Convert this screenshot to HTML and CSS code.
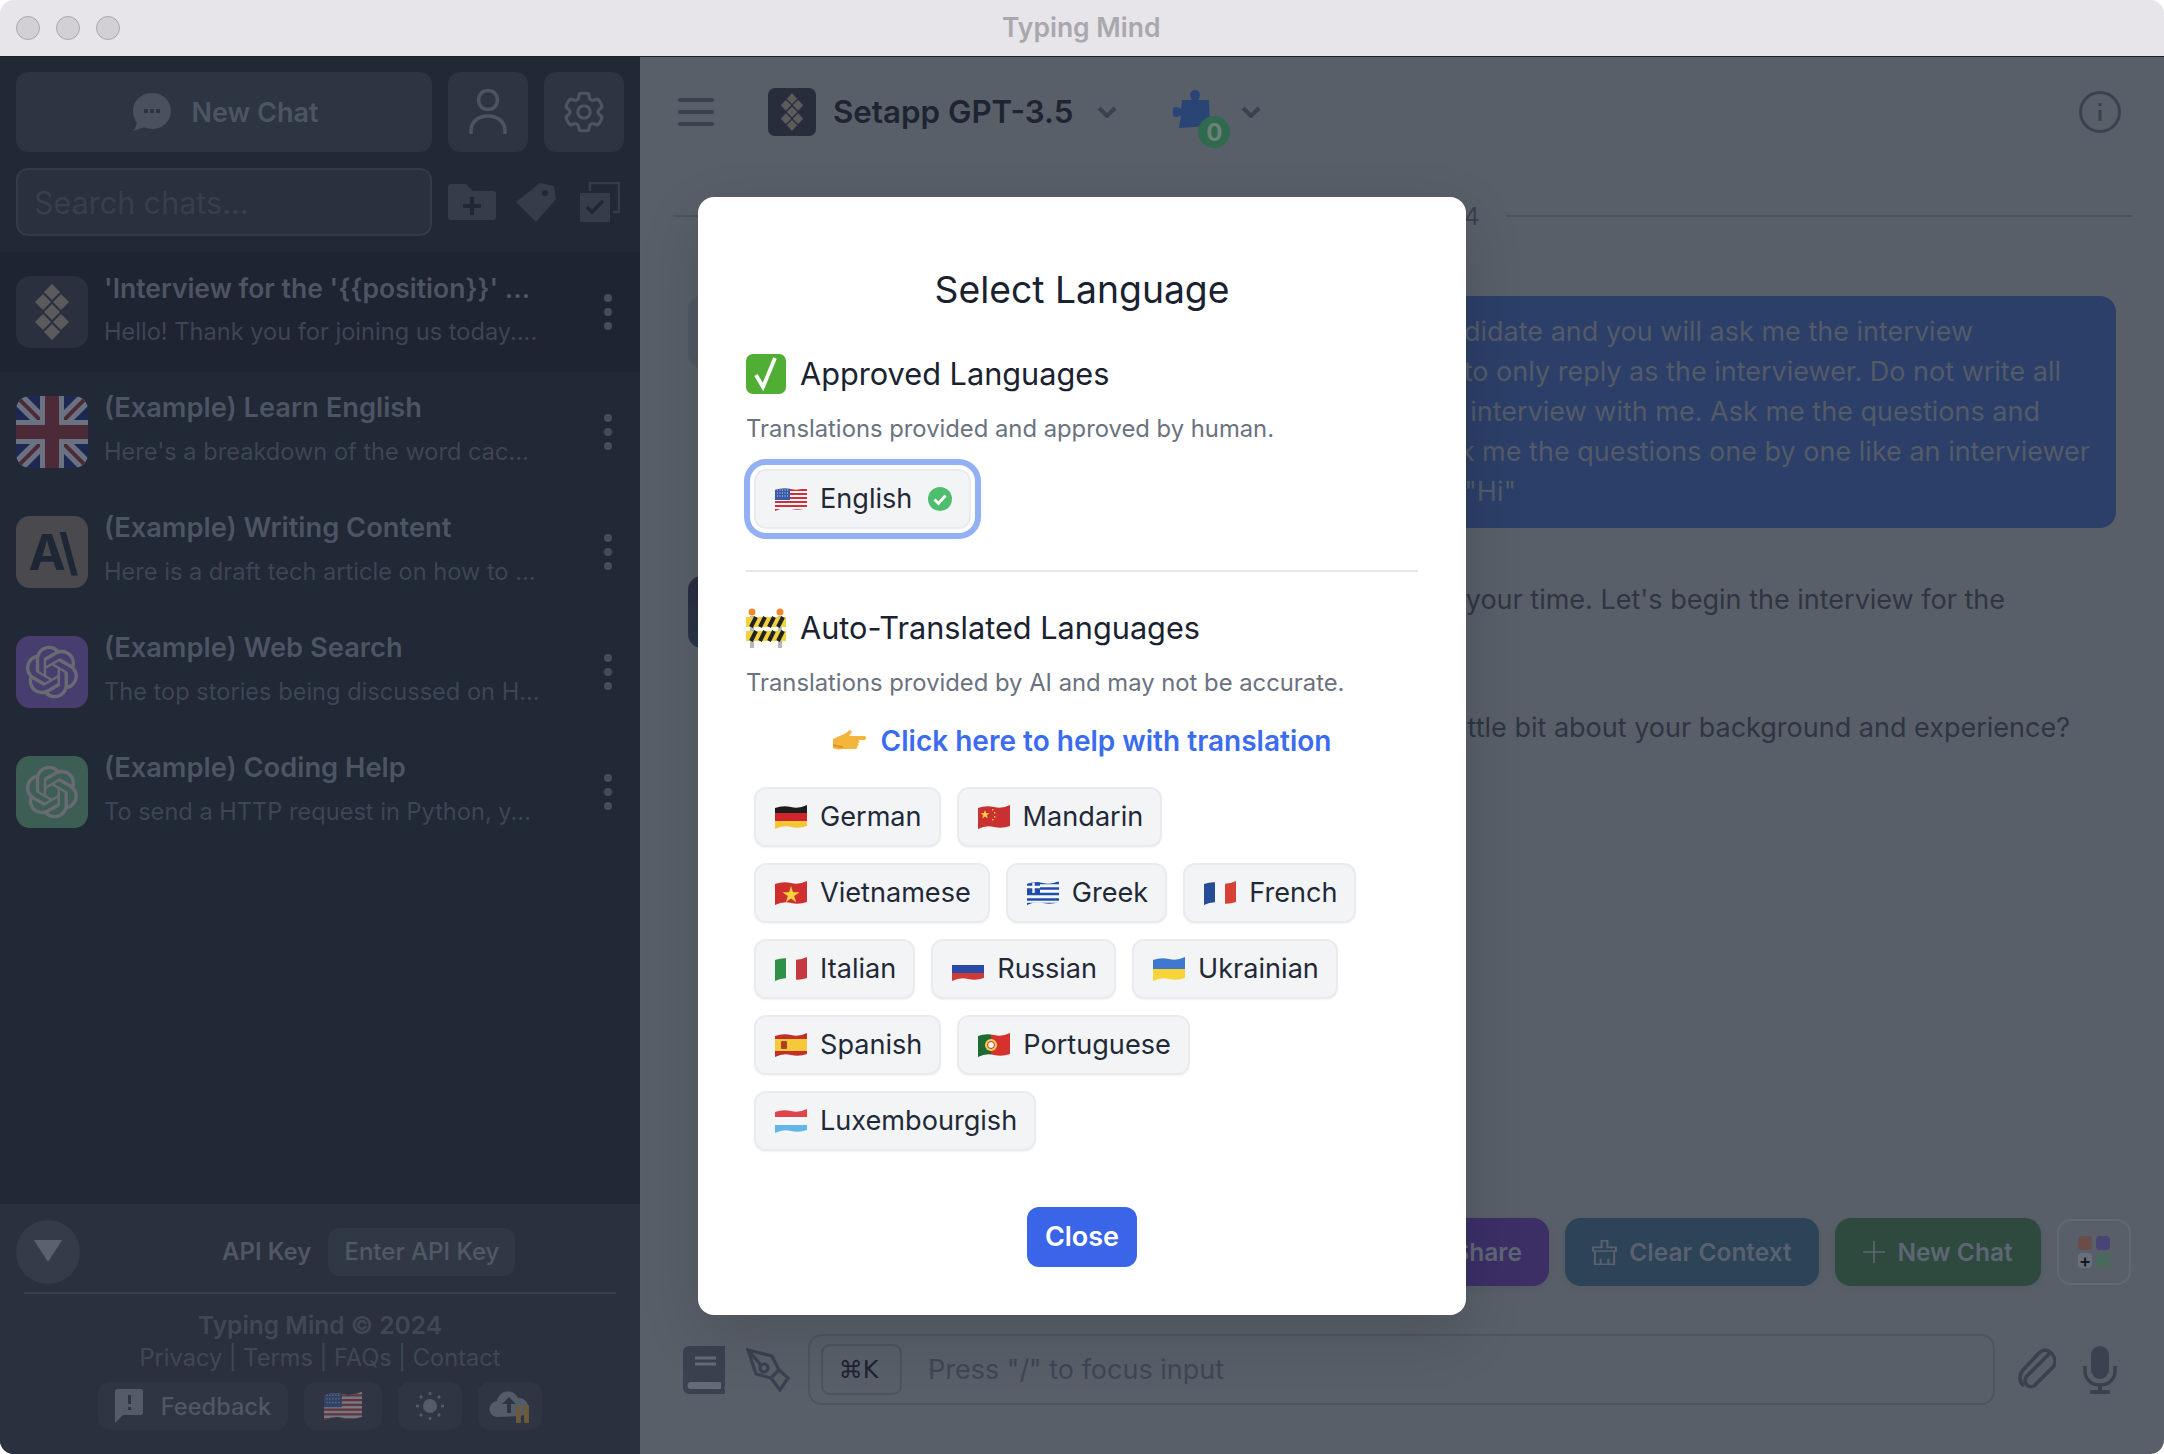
FILE: index.html
```html
<!DOCTYPE html>
<html lang="en">
<head>
<meta charset="utf-8">
<title>Typing Mind</title>
<link rel="stylesheet" href="styles.css">
</head>
<body>
<svg class="sprite" aria-hidden="true">
  <defs>
    <clipPath id="wave"><path d="M0 3Q8 0 16 2T32 0V21Q24 24 16 22T0 24Z"/></clipPath>
    <symbol id="setapp" viewBox="0 0 72 72"><g><path d="M36 8l8 8-8 8-8-8z"/><path d="M27 18l8 8-8 8-8-8z"/><path d="M45 18l8 8-8 8-8-8z"/><path d="M36 28l8 8-8 8-8-8z"/><path d="M27 38l8 8-8 8-8-8z"/><path d="M45 38l8 8-8 8-8-8z"/><path d="M36 48l8 8-8 8-8-8z"/></g></symbol>
    <symbol id="openai" viewBox="0 0 41 41"><path d="M37.5324 16.8707C37.9808 15.5241 38.1363 14.0974 37.9886 12.6859C37.8409 11.2744 37.3934 9.91076 36.676 8.68622C35.6126 6.83404 33.9882 5.3676 32.0373 4.4985C30.0864 3.62941 27.9098 3.40259 25.8215 3.85078C24.8796 2.7893 23.7219 1.94125 22.4257 1.36341C21.1295 0.785575 19.7249 0.491269 18.3058 0.500197C16.1708 0.495044 14.0893 1.16803 12.3614 2.42214C10.6335 3.67624 9.34853 5.44666 8.6917 7.47815C7.30085 7.76286 5.98686 8.3414 4.8377 9.17505C3.68854 10.0087 2.73073 11.0782 2.02839 12.312C0.956464 14.1591 0.498905 16.2988 0.721698 18.4228C0.944492 20.5467 1.83612 22.5449 3.268 24.1293C2.81966 25.4759 2.66413 26.9026 2.81182 28.3141C2.95951 29.7256 3.40701 31.0892 4.12437 32.3138C5.18791 34.1659 6.8123 35.6322 8.76321 36.5013C10.7141 37.3704 12.8907 37.5973 14.9789 37.1492C15.9208 38.2107 17.0786 39.0587 18.3747 39.6366C19.6709 40.2144 21.0755 40.5087 22.4946 40.4998C24.6307 40.5054 26.7133 39.8321 28.4418 38.5772C30.1704 37.3223 31.4556 35.5506 32.1119 33.5179C33.5027 33.2332 34.8167 32.6547 35.9659 31.821C37.115 30.9874 38.0728 29.9178 38.7752 28.684C39.8458 26.8371 40.3023 24.6979 40.0789 22.5748C39.8556 20.4517 38.9639 18.4544 37.5324 16.8707ZM22.4978 37.8849C20.7443 37.8874 19.0459 37.2733 17.6994 36.1501C17.7601 36.117 17.8666 36.0586 17.936 36.0161L25.9004 31.4156C26.1003 31.3019 26.2663 31.137 26.3813 30.9378C26.4964 30.7386 26.5563 30.5124 26.5549 30.2825V19.0542L29.9213 20.998C29.9389 21.0068 29.9541 21.0198 29.9656 21.0359C29.977 21.052 29.9842 21.0707 29.9867 21.0902V30.3889C29.9842 32.375 29.1946 34.2791 27.7909 35.6841C26.3872 37.0892 24.4838 37.8806 22.4978 37.8849ZM6.39227 31.0064C5.51397 29.4888 5.19742 27.7107 5.49804 25.9832C5.55718 26.0187 5.66048 26.0818 5.73461 26.1244L13.699 30.7248C13.8975 30.8408 14.1233 30.902 14.3532 30.902C14.583 30.902 14.8088 30.8408 15.0073 30.7248L24.731 25.1103V28.9979C24.7321 29.0177 24.7283 29.0376 24.7199 29.0556C24.7115 29.0736 24.6988 29.0893 24.6829 29.1012L16.6317 33.7497C14.9096 34.7416 12.8643 35.0097 10.9447 34.4954C9.02506 33.9811 7.38785 32.7263 6.39227 31.0064ZM4.29707 13.6194C5.17156 12.0998 6.55279 10.9364 8.19885 10.3327C8.19885 10.4013 8.19491 10.5228 8.19491 10.6071V19.808C8.19351 20.0378 8.25334 20.2638 8.36823 20.4629C8.48312 20.6619 8.64893 20.8267 8.84863 20.9404L18.5723 26.5542L15.206 28.4979C15.1894 28.5089 15.1703 28.5155 15.1505 28.5173C15.1307 28.5191 15.1107 28.516 15.0924 28.5082L7.04046 23.8557C5.32135 22.8601 4.06716 21.2235 3.55289 19.3046C3.03862 17.3858 3.30624 15.3413 4.29707 13.6194ZM31.955 20.0556L22.2312 14.4411L25.5976 12.4981C25.6142 12.4872 25.6333 12.4805 25.6531 12.4787C25.6729 12.4769 25.6928 12.4801 25.7111 12.4879L33.7631 17.1364C34.9967 17.849 36.0017 18.8982 36.6606 20.1613C37.3194 21.4244 37.6047 22.849 37.4832 24.2684C37.3617 25.6878 36.8382 27.0432 35.9743 28.1759C35.1103 29.3086 33.9415 30.1717 32.6047 30.6641C32.6047 30.5947 32.6047 30.4733 32.6047 30.3889V21.188C32.6066 20.9586 32.5474 20.7328 32.4332 20.5338C32.319 20.3348 32.154 20.1698 31.955 20.0556ZM35.3055 15.0128C35.2464 14.9765 35.1431 14.9142 35.069 14.8717L27.1045 10.2712C26.906 10.1554 26.6803 10.0943 26.4504 10.0943C26.2206 10.0943 25.9948 10.1554 25.7963 10.2712L16.0726 15.8858V11.9982C16.0715 11.9783 16.0753 11.9585 16.0837 11.9405C16.0921 11.9225 16.1048 11.9068 16.1207 11.8949L24.1719 7.25025C25.4053 6.53903 26.8158 6.19376 28.2383 6.25482C29.6608 6.31589 31.0364 6.78077 32.2044 7.59508C33.3723 8.40939 34.2842 9.53945 34.8334 10.8531C35.3826 12.1667 35.5464 13.6095 35.3055 15.0128ZM14.2424 21.9419L10.8752 19.9981C10.8576 19.9893 10.8423 19.9763 10.8309 19.9602C10.8195 19.9441 10.8122 19.9254 10.8098 19.9058V10.6071C10.8107 9.18295 11.2173 7.78848 11.9819 6.58696C12.7466 5.38544 13.8377 4.42659 15.1275 3.82264C16.4173 3.21869 17.8524 2.99464 19.2649 3.1767C20.6775 3.35876 22.0089 3.93941 23.1034 4.85067C23.0427 4.88379 22.937 4.94215 22.8668 4.98473L14.9024 9.58517C14.7025 9.69878 14.5366 9.86356 14.4215 10.0626C14.3065 10.2616 14.2466 10.4877 14.2479 10.7175L14.2424 21.9419ZM16.071 17.9991L20.4018 15.4978L24.7325 17.9975V22.9985L20.4018 25.4983L16.071 22.9985V17.9991Z"/></symbol>
    <symbol id="f-us" viewBox="0 0 32 24"><g clip-path="url(#wave)"><rect width="32" height="24" fill="#f4f4f4"/><path d="M0 3h32M0 7h32M0 11h32M0 15h32M0 19h32M0 23h32" stroke="#c9323c" stroke-width="2"/><rect width="15" height="13" fill="#3a5aa8"/><path d="M2 3h11M2 6h11M2 9h11" stroke="#cfd8ee" stroke-width="1.2" stroke-dasharray="1 1.5"/></g></symbol>
    <symbol id="f-de" viewBox="0 0 32 24"><g clip-path="url(#wave)"><rect width="32" height="9" fill="#1c1c1c"/><rect y="8" width="32" height="8" fill="#d1232a"/><rect y="16" width="32" height="8" fill="#f5c636"/></g></symbol>
    <symbol id="f-cn" viewBox="0 0 32 24"><g clip-path="url(#wave)"><rect width="32" height="24" fill="#c8312f"/><path d="M7 5l1.2 3.2h3.3l-2.7 2 1 3.2L7 11.5l-2.8 1.9 1-3.2-2.7-2h3.3z" fill="#f7cf46"/><path d="M14 4h1.4v1.4H14zM16 7h1.4v1.4H16zM16 11h1.4v1.4H16zM14 14h1.4v1.4H14z" fill="#f7cf46"/></g></symbol>
    <symbol id="f-vn" viewBox="0 0 32 24"><g clip-path="url(#wave)"><rect width="32" height="24" fill="#cf2f2f"/><path d="M16 5l2 6.2h6.5l-5.300 3.800 2 6.200L16 17.400l-5.200 3.800 2-6.200-5.300-3.800H14z" fill="#f8d33c"/></g></symbol>
    <symbol id="f-gr" viewBox="0 0 32 24"><g clip-path="url(#wave)"><rect width="32" height="24" fill="#f5f6fa"/><path d="M0 2h32M0 7.500h32M0 13h32M0 18.500h32M0 23h32" stroke="#1f4ea8" stroke-width="2.700"/><rect width="13" height="12" fill="#1f4ea8"/><path d="M6.500 0v12M0 6h13" stroke="#f5f6fa" stroke-width="2.400"/></g></symbol>
    <symbol id="f-fr" viewBox="0 0 32 24"><g clip-path="url(#wave)"><rect width="11" height="24" fill="#264c97"/><rect x="11" width="10" height="24" fill="#f5f6f6"/><rect x="21" width="11" height="24" fill="#d84236"/></g></symbol>
    <symbol id="f-it" viewBox="0 0 32 24"><g clip-path="url(#wave)"><rect width="11" height="24" fill="#2f9147"/><rect x="11" width="10" height="24" fill="#f5f6f6"/><rect x="21" width="11" height="24" fill="#c4383e"/></g></symbol>
    <symbol id="f-ru" viewBox="0 0 32 24"><g clip-path="url(#wave)"><rect width="32" height="9" fill="#f4f5f7"/><rect y="8" width="32" height="8" fill="#2a4aa5"/><rect y="16" width="32" height="8" fill="#cf3b34"/></g></symbol>
    <symbol id="f-ua" viewBox="0 0 32 24"><g clip-path="url(#wave)"><rect width="32" height="12" fill="#3f79cf"/><rect y="12" width="32" height="12" fill="#f7d437"/></g></symbol>
    <symbol id="f-es" viewBox="0 0 32 24"><g clip-path="url(#wave)"><rect width="32" height="24" fill="#c3302a"/><rect y="6" width="32" height="12" fill="#f7c93a"/><rect x="6" y="8" width="6" height="8" rx="1" fill="#a8432b"/></g></symbol>
    <symbol id="f-pt" viewBox="0 0 32 24"><g clip-path="url(#wave)"><rect width="13" height="24" fill="#1f6a32"/><rect x="13" width="19" height="24" fill="#d6322d"/><circle cx="13" cy="12" r="6" fill="#f2d24c"/><circle cx="13" cy="12" r="3.500" fill="#f5f5f5" stroke="#c5302b"/></g></symbol>
    <symbol id="f-lu" viewBox="0 0 32 24"><g clip-path="url(#wave)"><rect width="32" height="9" fill="#e0454c"/><rect y="8" width="32" height="8" fill="#f5f6f8"/><rect y="16" width="32" height="8" fill="#62b6ea"/></g></symbol>
  </defs>
</svg>

<div class="window">
  <header class="titlebar">
    <span class="light"></span><span class="light"></span><span class="light"></span>
    <span class="window-title">Typing Mind</span>
  </header>

  <div class="app">
    <aside class="sidebar">
      <div class="side-row">
        <button class="side-btn new-chat">
          <svg class="ic-chat" viewBox="0 0 40 40"><path d="M20 1c10.500 0 19 7.500 19 18s-8.500 18-19 18c-3 0-5.500-.5-8-1.700L1 39c2.500-2.700 3.600-5.500 3.700-8.500C2.300 27.300 1 23.500 1 19 1 8.500 9.500 1 20 1z" fill="#4a505e"/><path d="M12 17h4v4h-4zM18 17h4v4h-4zM24 17h4v4h-4z" fill="#2d3442"/></svg>
          New Chat
        </button>
        <button class="side-btn square">
          <svg class="ic-user" viewBox="0 0 38 48" fill="none" stroke="#4d5462" stroke-width="3.500"><circle cx="19" cy="12" r="9.500"/><path d="M2 46v-3c0-9 7-15 17-15s17 6 17 15v3"/></svg>
        </button>
        <button class="side-btn square">
          <svg class="ic-gear" viewBox="0 0 24 24" fill="none" stroke="#4d5462" stroke-width="1.500"><path d="M9.594 3.940c.09-.542.56-.94 1.110-.94h2.593c.55 0 1.020.398 1.110.94l.213 1.281c.063.374.313.686.645.870.074.040.147.083.22.127.325.196.72.257 1.075.124l1.217-.456a1.125 1.125 0 0 1 1.370.490l1.296 2.247a1.125 1.125 0 0 1-.26 1.431l-1.003.827c-.293.241-.438.613-.43.992a7.723 7.723 0 0 1 0 .255c-.008.378.137.75.43.991l1.004.827c.424.35.534.955.26 1.430l-1.298 2.247a1.125 1.125 0 0 1-1.369.491l-1.217-.456c-.355-.133-.75-.072-1.076.124a6.470 6.470 0 0 1-.22.128c-.331.183-.581.495-.644.869l-.213 1.281c-.09.543-.56.94-1.110.94h-2.594c-.55 0-1.019-.398-1.110-.94l-.213-1.281c-.062-.374-.312-.686-.644-.870a6.520 6.520 0 0 1-.22-.127c-.325-.196-.72-.257-1.076-.124l-1.217.456a1.125 1.125 0 0 1-1.369-.490l-1.297-2.247a1.125 1.125 0 0 1 .26-1.431l1.004-.827c.292-.24.437-.613.43-.991a6.932 6.932 0 0 1 0-.255c.007-.38-.138-.751-.43-.992l-1.004-.827a1.125 1.125 0 0 1-.26-1.430l1.297-2.247a1.125 1.125 0 0 1 1.370-.491l1.216.456c.356.133.751.072 1.076-.124.072-.044.146-.086.22-.128.332-.183.582-.495.644-.869l.214-1.280Z"/><circle cx="12" cy="12" r="3"/></svg>
        </button>
      </div>
      <div class="side-row search-row">
        <div class="search">Search chats...</div>
        <div class="search-tools">
          <svg class="ic-folder" viewBox="0 0 48 36"><path d="M0 3a3 3 0 0 1 3-3h15l7 7h20a3 3 0 0 1 3 3v23a3 3 0 0 1-3 3H3a3 3 0 0 1-3-3z" fill="#353c4a"/><path d="M24 13v18M15 22h18" stroke="#202735" stroke-width="4"/></svg>
          <svg class="ic-tag" viewBox="0 0 40 40"><path d="M24 1l14 3 2 13L20 40 0 20z" fill="#353c4a"/><circle cx="29" cy="11" r="3" fill="#202735"/></svg>
          <svg class="ic-copy" viewBox="0 0 40 40"><path d="M10 9V1h29v29h-6" fill="none" stroke="#353c4a" stroke-width="2.500"/><rect y="11" width="30" height="29" rx="1" fill="#353c4a"/><path d="M7 25l5 5 11-11" fill="none" stroke="#202735" stroke-width="3.500"/></svg>
        </div>
      </div>

      <ul class="chats">
        <li class="chat active">
          <div class="avatar av-setapp"><svg class="fill-logo"><use href="#setapp"/></svg></div>
          <div class="chat-text"><div class="chat-title">'Interview for the '{{position}}' ...</div><div class="chat-sub">Hello! Thank you for joining us today....</div></div>
          <div class="kebab"><i></i><i></i><i></i></div>
        </li>
        <li class="chat">
          <div class="avatar">
            <svg class="fill-logo" viewBox="0 0 72 72"><rect width="72" height="72" fill="#1d2952"/><path d="M0 0l72 72M72 0L0 72" stroke="#6b7180" stroke-width="14"/><path d="M0 0l72 72M72 0L0 72" stroke="#4d2a38" stroke-width="4"/><path d="M36 0v72M0 36h72" stroke="#6b7180" stroke-width="24"/><path d="M36 0v72M0 36h72" stroke="#4d2a38" stroke-width="14"/></svg>
          </div>
          <div class="chat-text"><div class="chat-title">(Example) Learn English</div><div class="chat-sub">Here's a breakdown of the word cac...</div></div>
          <div class="kebab"><i></i><i></i><i></i></div>
        </li>
        <li class="chat">
          <div class="avatar av-anthropic">A\</div>
          <div class="chat-text"><div class="chat-title">(Example) Writing Content</div><div class="chat-sub">Here is a draft tech article on how to ...</div></div>
          <div class="kebab"><i></i><i></i><i></i></div>
        </li>
        <li class="chat">
          <div class="avatar av-purple"><svg class="ai-logo"><use href="#openai"/></svg></div>
          <div class="chat-text"><div class="chat-title">(Example) Web Search</div><div class="chat-sub">The top stories being discussed on H...</div></div>
          <div class="kebab"><i></i><i></i><i></i></div>
        </li>
        <li class="chat">
          <div class="avatar av-green"><svg class="ai-logo"><use href="#openai"/></svg></div>
          <div class="chat-text"><div class="chat-title">(Example) Coding Help</div><div class="chat-sub">To send a HTTP request in Python, y...</div></div>
          <div class="kebab"><i></i><i></i><i></i></div>
        </li>
      </ul>

      <footer class="side-foot">
        <div class="api-row">
          <button class="round"><svg viewBox="0 0 28 24" class="ic-tri"><path d="M0 0h28L14 22z" fill="#5b626e"/></svg></button>
          <div class="api"><span class="api-label">API Key</span><span class="api-btn">Enter API Key</span></div>
        </div>
        <hr class="side-sep">
        <div class="copy">Typing Mind © 2024</div>
        <div class="links">Privacy | Terms | FAQs | Contact</div>
        <div class="foot-btns">
          <button class="foot-btn fb-feedback">
            <svg class="ic-fb" viewBox="0 0 28 34"><path d="M2 0h24a2 2 0 0 1 2 2v22a2 2 0 0 1-2 2H8l-8 8V2a2 2 0 0 1 2-2z" fill="#555c69"/><path d="M13 6h3v9h-3zM13 18h3v3h-3z" fill="#2d3442"/></svg>
            Feedback
          </button>
          <button class="foot-btn fb-flag"><svg class="flag dim"><use href="#f-us"/></svg></button>
          <button class="foot-btn fb-icon">
            <svg class="ic-sun" viewBox="0 0 28 28"><circle cx="14" cy="14" r="7" fill="#555c69"/><path d="M14 0v3M14 25v3M0 14h3M25 14h3M4 4l2 2M22 22l2 2M24 4l-2 2M6 22l-2 2" stroke="#555c69" stroke-width="2.500"/></svg>
          </button>
          <button class="foot-btn fb-icon">
            <svg class="ic-cloud" viewBox="0 0 42 34"><path d="M9 28a8 8 0 0 1-1-16A11 11 0 0 1 29 9a9 9 0 0 1 2 18z" fill="#555c69"/><path d="M18 24v-9h-5l7-7 7 7h-5v9z" fill="#2d3442"/><rect x="27" y="16" width="5" height="18" rx="1" fill="#6b5a3a"/><rect x="35" y="16" width="5" height="18" rx="1" fill="#6b5a3a"/></svg>
          </button>
        </div>
      </footer>
    </aside>

    <main class="main">
      <div class="top">
        <button class="burger"><i></i><i></i><i></i></button>
        <div class="model-logo"><svg class="fill-logo"><use href="#setapp"/></svg></div>
        <span class="model-name">Setapp GPT-3.5</span>
        <svg class="chev" viewBox="0 0 20 12" fill="none" stroke="#3a414f" stroke-width="4"><path d="M2 2l8 8 8-8"/></svg>
        <div class="plugin">
          <svg class="ic-puzzle" viewBox="0 0 42 42"><path d="M9 10h10c-1-2-2-3-2-5a5 5 0 0 1 10 0c0 2-1 3-2 5h11l1 26-31 2 2-13c-2 1-3 2-5 2a5 5 0 0 1 0-10c2 0 3 1 5 2z" fill="#2b4476"/></svg>
          <span class="badge">0</span>
        </div>
        <svg class="chev chev2" viewBox="0 0 20 12" fill="none" stroke="#3a414f" stroke-width="4"><path d="M2 2l8 8 8-8"/></svg>
        <svg class="ic-info" viewBox="0 0 42 42" fill="none" stroke="#3a414f" stroke-width="3"><circle cx="21" cy="21" r="19.500"/><path d="M21 19v11M21 12v3"/></svg>
      </div>

      <div class="thread">
        <div class="date"><span class="date-line"></span><span class="date-text">2024</span><span class="date-line"></span></div>
        <div class="msg">
          <div class="msg-avatar user"></div>
          <div class="bubble">
            <span class="ln e1">candidate and you will ask me the interview</span>
            <span class="ln e2">to only reply as the interviewer. Do not write all</span>
            <span class="ln e3">interview with me. Ask me the questions and</span>
            <span class="ln e4">Ask me the questions one by one like an interviewer</span>
            <span class="ln e5">"Hi"</span>
          </div>
        </div>
        <div class="msg reply">
          <div class="msg-avatar bot"></div>
          <div class="answer">
            <span class="ln a1">your time. Let's begin the interview for the</span>
            <span class="ln a3">little bit about your background and experience?</span>
          </div>
        </div>
      </div>

      <div class="actions">
        <button class="act act-share">Share</button>
        <button class="act act-clear">
          <svg class="ic-broom" viewBox="0 0 26 34" preserveAspectRatio="none" fill="none" stroke="#596070" stroke-width="2.200"><path d="M10 10V1h6v9h9v5H1v-5zM3 15v18h20V15M9 33v-8M17 33v-8"/></svg>
          Clear Context
        </button>
        <button class="act act-new">
          <svg class="ic-plus" viewBox="0 0 24 24" fill="none" stroke="#5e6673" stroke-width="1.800"><path d="M12 0v24M0 12h24"/></svg>
          New Chat
        </button>
        <button class="grid-btn">
          <span class="cell c-brown"></span><span class="cell c-purple"></span><span class="cell c-plus">+</span><span class="cell c-green"></span>
        </button>
      </div>

      <div class="composer">
        <svg class="ic-book" viewBox="0 0 42 48"><path d="M6 0h36v40c-1 1-1 3 0 4v4H6a6 6 0 0 1-6-6V6a6 6 0 0 1 6-6z" fill="#3a414f"/><path d="M12 12h21M12 18h21" stroke="#656b76" stroke-width="3"/><path d="M8 36h30v7H8a3.500 3.500 0 0 1 0-7z" fill="#656b76"/></svg>
        <svg class="ic-pen" viewBox="0 0 44 44" fill="none" stroke="#3a414f" stroke-width="3.200"><path d="M2 2l24 6 7 14-8 8-15-4zM2 2l13 15"/><circle cx="18" cy="20" r="4"/><path d="M33 22l9 8-8 12-9-12"/></svg>
        <div class="input">
          <kbd class="kbd">⌘K</kbd>
          <span class="placeholder">Press "/" to focus input</span>
        </div>
        <svg class="ic-clip" viewBox="0 0 38 42" fill="none" stroke="#3a414f" stroke-width="3.600"><path d="M32 5L9 28c-3 3-2 7 0 9 3 3 7 2 9-1L35 19c5-6 0-13-3-15-4-3-8-2-11 1L5 22c-5 6-3 13 1 16"/></svg>
        <svg class="ic-mic" viewBox="0 0 34 48"><rect x="8" width="18" height="33" rx="9" fill="#3a414f"/><path d="M2 20v5c0 9 7 14 15 14s15-5 15-14v-5" fill="none" stroke="#3a414f" stroke-width="3.500"/><path d="M15 38h4v6h-4z" fill="#3a414f"/><rect x="7" y="44" width="20" height="4" rx="1" fill="#3a414f"/></svg>
      </div>
    </main>

    <div class="overlay">
      <section class="modal">
        <h2 class="modal-title">Select Language</h2>

        <h3 class="group-title">
          <svg class="emoji" viewBox="0 0 40 40"><rect width="40" height="40" rx="7" fill="#4fae33"/><path d="M10 21l7 12L29 4" fill="none" stroke="#fff" stroke-width="3.800"/></svg>
          Approved Languages
        </h3>
        <p class="group-desc">Translations provided and approved by human.</p>
        <div class="chips approved">
          <div class="chip-row">
            <button class="chip selected">
              <svg class="flag"><use href="#f-us"/></svg>English
              <svg class="ic-ok" viewBox="0 0 24 24"><circle cx="12" cy="12" r="12" fill="#4ebd6d"/><path d="M6.500 12.500l4 4 7-8" fill="none" stroke="#fff" stroke-width="2.800"/></svg>
            </button>
          </div>
        </div>

        <hr class="modal-sep">

        <h3 class="group-title">
          <svg class="emoji" viewBox="0 0 40 40"><path d="M6 8v32M34 8v32" stroke="#b8b8bc" stroke-width="4"/><circle cx="6" cy="4" r="3.500" fill="#ef8a2c"/><circle cx="34" cy="4" r="3.500" fill="#ef8a2c"/><rect y="9" width="40" height="10" fill="#f2d23c"/><rect y="23" width="40" height="10" fill="#f2d23c"/><path d="M5 19l5-10M14 19l5-10M23 19l5-10M32 19l5-10M5 33l5-10M14 33l5-10M23 33l5-10M32 33l5-10" stroke="#222" stroke-width="4"/></svg>
          Auto-Translated Languages
        </h3>
        <p class="group-desc">Translations provided by AI and may not be accurate.</p>
        <a class="help" href="#">
          <svg class="ic-hand" viewBox="0 0 36 22"><path d="M0 9c3-1 6-3 9-4 3-1 5-3 8-5l2 2-3 4h15c3 0 3 4 0 4h-6c2 0 2 3 0 3 1 1 1 3-1 3 1 2 0 3-2 3H10C5 20 2 19 0 18z" fill="#f5b43c"/><path d="M0 15c3 1 6 2 10 2" stroke="#e0912a" stroke-width="2" fill="none"/></svg>
          Click here to help with translation
        </a>
        <div class="chips">
          <div class="chip-row">
            <button class="chip"><svg class="flag"><use href="#f-de"/></svg>German</button>
            <button class="chip"><svg class="flag"><use href="#f-cn"/></svg>Mandarin</button>
          </div>
          <div class="chip-row">
            <button class="chip"><svg class="flag"><use href="#f-vn"/></svg>Vietnamese</button>
            <button class="chip"><svg class="flag"><use href="#f-gr"/></svg>Greek</button>
            <button class="chip"><svg class="flag"><use href="#f-fr"/></svg>French</button>
          </div>
          <div class="chip-row">
            <button class="chip"><svg class="flag"><use href="#f-it"/></svg>Italian</button>
            <button class="chip"><svg class="flag"><use href="#f-ru"/></svg>Russian</button>
            <button class="chip"><svg class="flag"><use href="#f-ua"/></svg>Ukrainian</button>
          </div>
          <div class="chip-row">
            <button class="chip"><svg class="flag"><use href="#f-es"/></svg>Spanish</button>
            <button class="chip"><svg class="flag"><use href="#f-pt"/></svg>Portuguese</button>
          </div>
          <div class="chip-row">
            <button class="chip"><svg class="flag"><use href="#f-lu"/></svg>Luxembourgish</button>
          </div>
        </div>
        <div class="modal-foot"><button class="close">Close</button></div>
      </section>
    </div>
  </div>
</div>
</body>
</html>
```

FILE: styles.css
```css
* { box-sizing: border-box; }
html, body { margin: 0; height: 100%; background: #fff; }
body { font-family: Inter, "Liberation Sans", sans-serif; overflow: hidden; }
button { font: inherit; border: 0; padding: 0; background: none; color: inherit; }
ul { list-style: none; margin: 0; padding: 0; }
h2, h3, p, hr { margin: 0; }
i { display: block; }
.sprite { position: absolute; width: 0; height: 0; overflow: hidden; }

.window { height: 1454px; display: flex; flex-direction: column; border-radius: 14px; overflow: hidden; }
.titlebar { height: 57px; flex: none; display: flex; align-items: center; gap: 16px; padding: 0 16px; background: #e7e5ea; border-bottom: 1px solid #1c2130; }
.light { width: 24px; height: 24px; border-radius: 50%; background: #d2d0d6; border: 1px solid #a8a7ac; }
.window-title { flex: none; margin-left: 866px; padding-bottom: 2px; font-size: 26.5px; font-weight: 600; color: #a9a8ad; }

.app { flex: 1; display: flex; position: relative; min-height: 0; }

/* Sidebar */
.sidebar { width: 640px; flex: none; display: flex; flex-direction: column; background: #212836; padding-top: 15px; }
.side-row { display: flex; gap: 16px; padding: 0 16px; }
.side-btn { height: 80px; background: #2d3442; border-radius: 12px; display: flex; align-items: center; justify-content: center; color: #4d5462; font-size: 27px; font-weight: 600; }
.new-chat { width: 416px; gap: 20px; padding-left: 2px; }
.square { width: 80px; }
.ic-chat { width: 40px; height: 40px; }
.ic-user { width: 38px; height: 48px; }
.ic-gear { width: 50px; height: 50px; }
.search-row { margin-top: 16px; align-items: center; }
.search { width: 416px; height: 68px; display: flex; align-items: center; padding-left: 16px; background: #2a303e; border: 2px solid #333a48; border-radius: 12px; font-size: 30.500px; color: #383f4d; }
.search-tools { display: flex; align-items: center; gap: 20px; }
.ic-folder { width: 48px; height: 36px; }
.ic-tag { width: 40px; height: 40px; }
.ic-copy { width: 40px; height: 40px; margin-left: 4px; }
.chats { margin-top: 16px; }
.chat { height: 120px; padding: 24px 16px; display: flex; align-items: center; }
.chat.active { background: #1e2432; }
.avatar { width: 72px; height: 72px; flex: none; border-radius: 14px; overflow: hidden; display: flex; align-items: center; justify-content: center; }
.fill-logo { width: 100%; height: 100%; fill: #5b5a5c; display: block; }
.av-setapp { background: #2a303d; }
.av-anthropic { background: #4a494d; color: #1f2636; font-size: 50px; font-weight: 700; letter-spacing: -3px; }
.av-purple { background: #473d6f; }
.av-green { background: #3d5e54; }
.ai-logo { width: 54px; height: 54px; fill: #686b73; }
.chat-text { flex: 1; margin-left: 16px; min-width: 0; padding-bottom: 6px; }
.chat-title { font-size: 27.300px; line-height: 36px; font-weight: 600; color: #4d5463; white-space: nowrap; }
.chat.active .chat-title { font-size: 26.500px; }
.chat-sub { margin-top: 10px; font-size: 23.600px; line-height: 32px; color: #3e4554; white-space: nowrap; }
.kebab { width: 8px; margin: 0 12px 0 16px; display: flex; flex-direction: column; gap: 6px; flex: none; }
.kebab i { width: 8px; height: 8px; border-radius: 50%; background: #454c5a; }

.side-foot { margin-top: auto; height: 250px; flex: none; background: #2a303e; padding: 16px 16px 0; }
.api-row { display: flex; align-items: center; }
.round { width: 64px; height: 64px; border-radius: 50%; background: #353b49; display: flex; align-items: center; justify-content: center; }
.ic-tri { width: 28px; height: 24px; }
.api { margin-left: 142px; display: flex; align-items: center; gap: 17px; }
.api-label { padding-bottom: 2px; font-size: 24px; font-weight: 600; color: #4f5664; }
.api-btn { height: 48px; padding: 0 16px 2px; display: flex; align-items: center; background: #313845; border-radius: 12px; font-size: 24px; font-weight: 500; color: #515866; }
.side-sep { margin: 8px 8px 0; border: 0; height: 2px; background: #363d4b; }
.copy { margin-top: 14px; text-align: center; font-size: 24.500px; line-height: 34px; font-weight: 600; color: #414855; }
.links { text-align: center; font-size: 23.600px; line-height: 32px; color: #414855; }
.foot-btns { margin-top: 8px; display: flex; justify-content: center; gap: 16px; }
.foot-btn { height: 48px; border-radius: 12px; background: #2f3543; display: flex; align-items: center; justify-content: center; color: #505765; font-size: 23.600px; font-weight: 500; }
.fb-feedback { width: 190px; gap: 18px; }
.fb-flag { width: 78px; }
.fb-icon { width: 64px; }
.ic-fb { width: 28px; height: 34px; }
.ic-sun { width: 28px; height: 28px; }
.ic-cloud { width: 42px; height: 34px; }
.flag { width: 32px; height: 24px; flex: none; }
.flag.dim { width: 38px; height: 30px; opacity: .35; }

/* Main */
.main { flex: 1; min-width: 0; background: #595f69; display: flex; flex-direction: column; overflow: hidden; }
.top { height: 110px; flex: none; display: flex; align-items: center; padding: 0 43px 0 38px; }
.burger { width: 36px; display: flex; flex-direction: column; gap: 8px; }
.burger i { height: 4px; border-radius: 2px; background: #3a414f; }
.model-logo { width: 48px; height: 48px; margin-left: 54px; border-radius: 7px; background: #262d3b; overflow: hidden; }
.model-name { margin-left: 17px; font-size: 31.300px; font-weight: 600; color: #1e2432; white-space: nowrap; }
.chev { width: 20px; height: 12px; margin-left: 24px; flex: none; }
.plugin { position: relative; width: 42px; height: 42px; margin-left: 56px; margin-top: -2px; flex: none; }
.ic-puzzle { width: 42px; height: 42px; display: block; }
.badge { position: absolute; left: 25px; top: 26px; width: 32px; height: 32px; border-radius: 50%; background: #2f6a4f; color: #6d8079; font-size: 24px; font-weight: 700; display: flex; align-items: center; justify-content: center; }
.chev2 { margin-left: 26px; }
.ic-info { width: 42px; height: 42px; margin-left: auto; }

.thread { flex: 1; min-height: 0; }
.date { display: flex; align-items: center; height: 40px; margin: 29px 32px 0 33px; }
.date-line { flex: 1; height: 2px; background: #4d535e; }
.date-text { width: 206px; padding-right: 26px; text-align: right; font-size: 24px; color: #3a414f; white-space: nowrap; }
.msg { display: flex; margin: 60px 48px 0; gap: 16px; }
.msg-avatar { width: 72px; height: 72px; flex: none; border-radius: 14px; }
.msg-avatar.user { background: #525964; }
.msg-avatar.bot { background: linear-gradient(#2a2b3e, #27364a); }
.bubble { flex: 1; padding: 16px 0; border-radius: 16px; background: #2c3f68; color: #535a68; }
.answer { flex: 1; padding-top: 4px; color: #2f3542; }
.ln { display: block; height: 40px; font-size: 27px; line-height: 40px; white-space: nowrap; text-align: right; }
.reply { margin-top: 48px; }
.e1 { padding-right: 143px; }
.e2 { padding-right: 55px; }
.e3 { padding-right: 76px; }
.e4 { padding-right: 26px; }
.e5 { padding-right: 600px; }
.a1 { padding-right: 111px; }
.a3 { padding-right: 46px; margin-top: 88px; }

.actions { flex: none; height: 68px; display: flex; justify-content: flex-end; align-items: center; gap: 16px; padding-right: 33px; }
.act { height: 68px; border-radius: 16px; display: flex; align-items: center; justify-content: center; gap: 12px; font-size: 24.500px; font-weight: 600; color: #5e6673; box-shadow: 0 2px 6px rgba(0,0,0,.06); }
.act-share { width: 190px; justify-content: flex-end; padding-right: 27px; background: #3b2f66; }
.act-clear { width: 254px; background: #2c4358; color: #596070; }
.act-new { width: 206px; background: #2e4a3e; color: #5e6673; }
.grid-btn { width: 74px; height: 66px; border: 2px solid #626873; border-radius: 14px; display: grid; grid-template-columns: 14px 14px; grid-template-rows: 14px 15px; gap: 3px 4px; justify-content: center; align-content: center; }
.cell { border-radius: 4px; }
.c-brown { background: #6a4d49; }
.c-purple { background: #4a4476; }
.c-plus { background: #6a7079; color: #141824; font-size: 18px; line-height: 15px; text-align: center; font-weight: 600; }
.c-green { background: #48695c; }
.ic-broom { width: 25px; height: 25px; }
.ic-plus { width: 22px; height: 22px; }

.composer { flex: none; height: 168px; padding: 48px 47px 0 43px; display: flex; align-items: flex-start; }
.ic-book { width: 42px; height: 48px; margin-top: 12px; flex: none; }
.ic-pen { width: 44px; height: 44px; margin: 14px 0 0 21px; flex: none; }
.input { flex: 1; margin-left: 18px; height: 71px; border: 2px solid #4f5560; border-radius: 14px; display: flex; align-items: center; padding-left: 11px; }
.kbd { width: 81px; height: 51px; border: 2px solid #4d535e; border-radius: 9px; display: flex; align-items: center; justify-content: center; padding-right: 6px; font-family: "DejaVu Sans", Inter, sans-serif; font-size: 24px; color: #1e2432; }
.placeholder { margin-left: 26px; font-size: 27px; color: #3f4654; }
.ic-clip { width: 38px; height: 42px; margin: 14px 0 0 23px; flex: none; }
.ic-mic { width: 34px; height: 48px; margin: 12px 0 0 27px; flex: none; }

/* Modal */
.overlay { position: absolute; inset: 0; display: flex; align-items: center; justify-content: center; }
.modal { width: 768px; padding: 69px 48px 48px; background: #fff; border-radius: 16px; box-shadow: 0 20px 60px rgba(0,0,0,.14); color: #1a2230; }
.modal-title { text-align: center; font-size: 37.300px; line-height: 48px; font-weight: 400; }
.group-title { margin-top: 40px; display: flex; align-items: center; gap: 14px; font-size: 30.700px; line-height: 40px; font-weight: 400; }
.modal-sep + .group-title { margin-top: 36px; }
.emoji { width: 40px; height: 40px; flex: none; }
.group-desc { margin-top: 17px; font-size: 23.800px; line-height: 36px; color: #6b7280; }
.chips { display: flex; flex-direction: column; gap: 16px; padding-left: 8px; margin-top: 26px; }
.chips.approved { margin-top: 22px; }
.chip-row { display: flex; gap: 16px; }
.chip { height: 60px; display: inline-flex; align-items: center; gap: 13px; padding: 0 17px 0 19px; background: #f3f4f6; border: 2px solid #eaebef; border-radius: 12px; box-shadow: 0 1px 2px rgba(0,0,0,.05); font-size: 27.100px; color: #1f2937; white-space: nowrap; }
.chip.selected { box-shadow: 0 0 0 4px #fff, 0 0 0 10px #93b0f5; width: 217px; }
.ic-ok { width: 24px; height: 24px; flex: none; margin-left: 3px; }
.modal-sep { margin-top: 41px; border: 0; height: 2px; background: #e5e7eb; }
.help { margin-top: 20px; height: 40px; display: flex; align-items: center; justify-content: center; gap: 12px; font-size: 28px; font-weight: 600; color: #3b6cf0; text-decoration: none; }
.ic-hand { width: 36px; height: 22px; flex: none; }
.modal-foot { margin-top: 56px; display: flex; justify-content: center; }
.close { width: 110px; height: 60px; border-radius: 12px; background: #3b65e8; color: #fff; font-size: 27px; font-weight: 600; }
```
